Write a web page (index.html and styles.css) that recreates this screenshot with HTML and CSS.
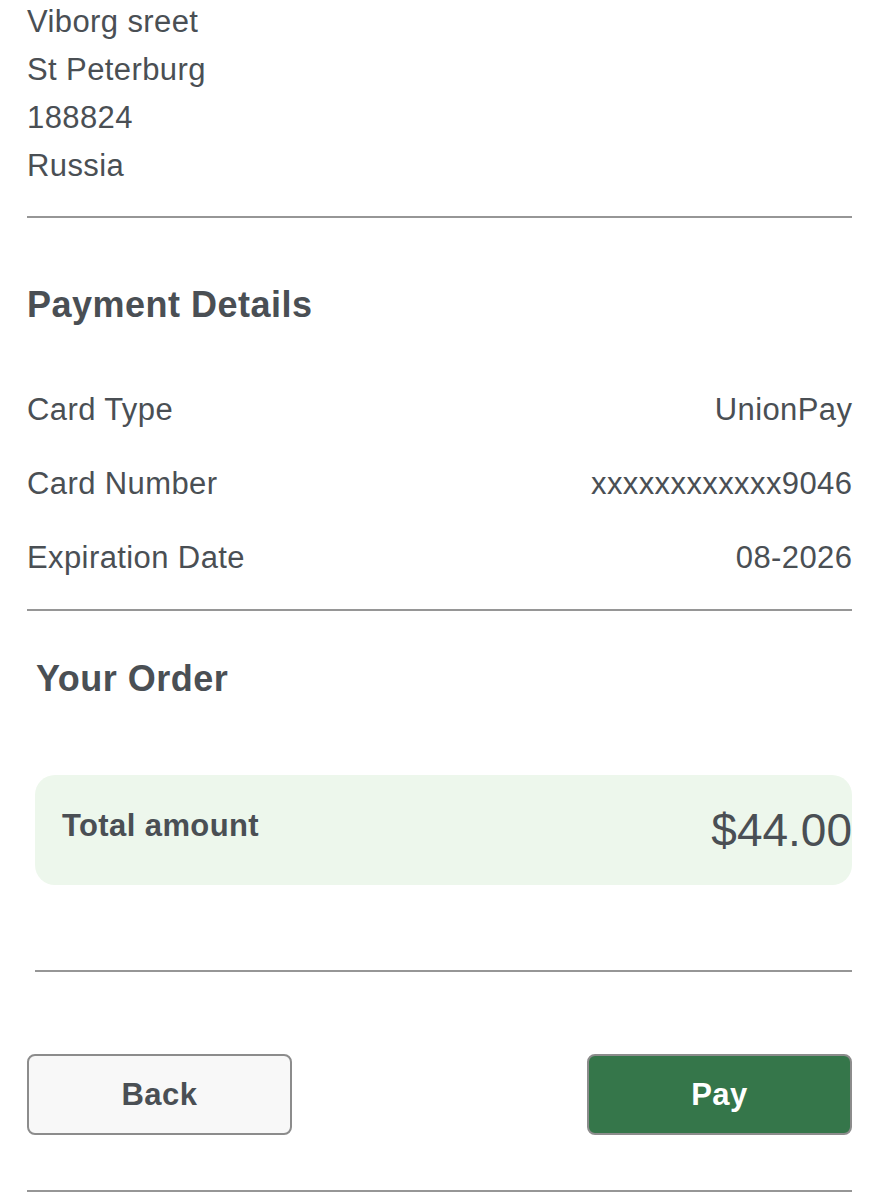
FILE: index.html
```html
<!DOCTYPE html>
<html lang="en">
<head>
    <meta charset="UTF-8">
    <meta name="viewport" content="width=device-width, initial-scale=1.0">
    <title>Checkout - Review</title>
    <link rel="stylesheet" href="styles.css">
</head>
<body>
    <div class="container">
        <div class="address">
            <p>Viborg sreet</p>
            <p>St Peterburg</p>
            <p>188824</p>
            <p>Russia</p>
        </div>
        <hr class="divider">

        <section class="payment">
            <h2>Payment Details</h2>
            <div class="detail-row">
                <span>Card Type</span>
                <span>UnionPay</span>
            </div>
            <div class="detail-row">
                <span>Card Number</span>
                <span>xxxxxxxxxxxx9046</span>
            </div>
            <div class="detail-row">
                <span>Expiration Date</span>
                <span>08-2026</span>
            </div>
        </section>
        <hr class="divider">

        <section class="order">
            <h2>Your Order</h2>
            <div class="total-box">
                <span class="total-label">Total amount</span>
                <span class="total-value">$44.00</span>
            </div>
            <hr class="divider">
        </section>

        <div class="actions">
            <button class="btn btn-back">Back</button>
            <button class="btn btn-pay">Pay</button>
        </div>
        <hr class="divider bottom">
    </div>
</body>
</html>
```

FILE: styles.css
```css
body {
    font-family: "Liberation Sans", Arial, sans-serif;
    background-color: #ffffff;
    color: #4a4f54;
    margin: 0;
    padding: 0;
}
.container {
    padding: 0 27px;
}
.address {
    margin-top: -2px;
}
.address p {
    margin: 0;
    font-size: 31px;
    letter-spacing: 0.4px;
    line-height: 48px;
}
.divider {
    border: none;
    height: 2px;
    background-color: #969696;
    margin: 26px 0 0 0;
}
h2 {
    font-size: 36px;
    font-weight: bold;
    letter-spacing: 0.5px;
    line-height: 40px;
    margin: 0;
}
.payment h2 {
    margin-top: 67px;
    margin-bottom: 48px;
}
.detail-row {
    display: flex;
    justify-content: space-between;
    align-items: center;
    height: 74px;
    font-size: 31px;
    letter-spacing: 0.4px;
}
.detail-row span:last-child {
    margin-right: -0.4px;
}
.payment + .divider {
    margin-top: 14px;
}
.order {
    padding-left: 8px;
}
.order h2 {
    margin-top: 48px;
    padding-left: 1px;
}
.total-box {
    display: flex;
    justify-content: space-between;
    align-items: center;
    height: 110px;
    margin-top: 76px;
    padding-left: 27px;
    background-color: #edf7ec;
    border-radius: 20px;
}
.total-label {
    font-size: 31px;
    font-weight: bold;
    letter-spacing: 0.4px;
    margin-top: -8px;
}
.total-value {
    font-size: 46px;
}
.order .divider {
    margin-top: 85px;
}
.actions {
    display: flex;
    justify-content: space-between;
    margin-top: 82px;
}
.btn {
    width: 265px;
    height: 81px;
    font-family: "Liberation Sans", Arial, sans-serif;
    font-size: 31px;
    font-weight: bold;
    letter-spacing: 0.5px;
    border: 2px solid #8c8c8c;
    border-radius: 8px;
}
.btn-back {
    background-color: #f8f8f8;
    color: #4a4f54;
}
.btn-pay {
    background-color: #35764a;
    color: #ffffff;
}
.divider.bottom {
    margin-top: 55px;
}
```
